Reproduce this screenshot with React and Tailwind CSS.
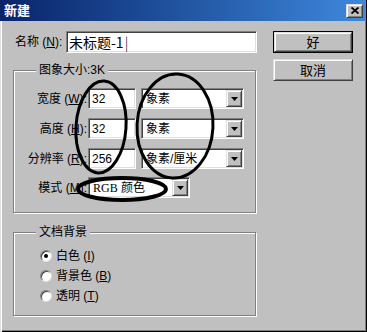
import React from "react";

const sunken =
  "border border-t-[#808080] border-l-[#808080] border-r-white border-b-white shadow-[inset_1px_1px_0_#404040,inset_-1px_-1px_0_#dfdfdf] bg-white";
const raised =
  "border border-t-[#dfdfdf] border-l-[#dfdfdf] border-r-[#404040] border-b-[#404040] shadow-[inset_1px_1px_0_#fff,inset_-1px_-1px_0_#808080] bg-[#c0c0c0]";
const etched =
  "border border-[#808080] shadow-[inset_1px_1px_0_#fff,1px_1px_0_#fff]";

const Arrow = () => (
  <span className={`${raised} w-[16px] h-[17px] flex items-center justify-center`}>
    <svg width="7" height="4" viewBox="0 0 7 4">
      <path d="M0 0h7L3.5 4z" fill="#000" />
    </svg>
  </span>
);

const Row = ({ label, value, unit, className }) => (
  <div className={`flex items-center h-[21px] ${className}`}>
    <span className="w-[74px] text-right pr-[1px] leading-none">{label}</span>
    <div className={`${sunken} w-[48px] h-[21px] flex items-center pl-[3px] leading-none`}>
      {value}
    </div>
    <div className={`${sunken} w-[103px] h-[21px] ml-[5px] flex items-center justify-between pl-[4px] pr-[1px] leading-none`}>
      <span>{unit}</span>
      <Arrow />
    </div>
  </div>
);

const Radio = ({ checked }) => (
  <span className="w-[12px] h-[12px] rounded-full bg-white border border-t-[#808080] border-l-[#808080] border-r-[#dfdfdf] border-b-[#dfdfdf] shadow-[inset_1px_1px_0_#404040] flex items-center justify-center">
    {checked && <span className="w-[4px] h-[4px] rounded-full bg-black" />}
  </span>
);

const App = () => {
  return (
    <div className="relative w-[367px] h-[332px] bg-[#c0c0c0] text-black text-[12px] font-['Liberation_Sans','Noto_Sans_CJK_SC',sans-serif] shadow-[inset_1px_0_0_#dfdfdf,inset_2px_0_0_#fff,inset_-1px_-1px_0_#000,inset_-2px_-2px_0_#808080] overflow-hidden">

      {/* Title bar */}
      <div className="h-[21px] mr-[2px] flex items-center justify-between pl-[4px] pr-[2px] bg-linear-to-r from-[#0a246a] to-[#3f88dc]">
        <span className="text-white font-bold text-[13px] leading-none">新建</span>
        <span className={`${raised} w-[17px] h-[14px] flex items-center justify-center`}>
          <svg width="8" height="7" viewBox="0 0 8 7">
            <path d="M0.5 0.5L7.5 6.5M7.5 0.5L0.5 6.5" stroke="#000" strokeWidth="1.8" />
          </svg>
        </span>
      </div>

      <div className="flex pt-[10px]">

        {/* Left column */}
        <div className="pl-[13px] w-[257px]">

          {/* Name */}
          <div className="flex items-center h-[22px]">
            <span className="w-[53px] pl-[2px] leading-none">
              名称 (<u>N</u>):
            </span>
            <div className={`${sunken} w-[191px] h-[22px] flex items-center pl-[2px] text-[14px] leading-none font-['Noto_Sans_CJK_SC',sans-serif]`}>
              未标题-1<span className="ml-[1px] font-light">|</span>
            </div>
          </div>

          {/* Image size */}
          <fieldset className={`${etched} w-[243px] mt-[9px] pt-[10px] pb-[14px]`}>
            <legend className="ml-[22px] px-[3px] h-[16px] leading-[16px] bg-[#c0c0c0]">
              图象大小:3K
            </legend>
            <Row label={<>宽度 (<u>W</u>):</>} value="32" unit="象素" />
            <Row label={<>高度 (<u>H</u>):</>} value="32" unit="象素" className="mt-[9px]" />
            <Row label={<>分辨率 (<u>R</u>):</>} value="256" unit="象素/厘米" className="mt-[9px]" />
            <div className="flex items-center h-[21px] mt-[8px]">
              <span className="w-[74px] text-right pr-[1px] leading-none">
                模式 (<u>M</u>):
              </span>
              <div className={`${sunken} w-[102px] h-[21px] flex items-center justify-between pl-[4px] pr-[1px] leading-none`}>
                <span>
                  <span className="font-['Liberation_Serif',serif]">RGB</span> 颜色
                </span>
                <Arrow />
              </div>
            </div>
          </fieldset>

          {/* Document background */}
          <fieldset className={`${etched} w-[243px] mt-[11px] pt-[6px] pb-[9px]`}>
            <legend className="ml-[22px] px-[3px] h-[16px] leading-[16px] bg-[#c0c0c0]">
              文档背景
            </legend>
            <div className="flex items-center h-[20px] pl-[26px]">
              <Radio checked />
              <span className="ml-[4px] leading-none">白色 (<u>I</u>)</span>
            </div>
            <div className="flex items-center h-[20px] pl-[26px]">
              <Radio />
              <span className="ml-[4px] leading-none">背景色 (<u>B</u>)</span>
            </div>
            <div className="flex items-center h-[20px] pl-[26px]">
              <Radio />
              <span className="ml-[4px] leading-none">透明 (<u>T</u>)</span>
            </div>
          </fieldset>
        </div>

        {/* Buttons */}
        <div className="ml-[16px] flex flex-col gap-[6px]">
          <div className="border border-black w-[80px] h-[22px]">
            <button className={`${raised} w-full h-full text-[13px] leading-none`}>好</button>
          </div>
          <button className={`${raised} w-[80px] h-[22px] text-[13px] leading-none`}>取消</button>
        </div>
      </div>

      {/* Hand-drawn marks */}
      <svg className="absolute inset-0 pointer-events-none" width="367" height="332" viewBox="0 0 367 332">
        <ellipse cx="101" cy="127" rx="25" ry="46" transform="rotate(4 101 127)" fill="none" stroke="#000" strokeWidth="3" />
        <ellipse cx="175" cy="126" rx="38" ry="52" transform="rotate(3 175 126)" fill="none" stroke="#000" strokeWidth="3" />
        <ellipse cx="122" cy="189" rx="44" ry="11" fill="none" stroke="#000" strokeWidth="4" />
      </svg>
    </div>
  );
};

export default App;
